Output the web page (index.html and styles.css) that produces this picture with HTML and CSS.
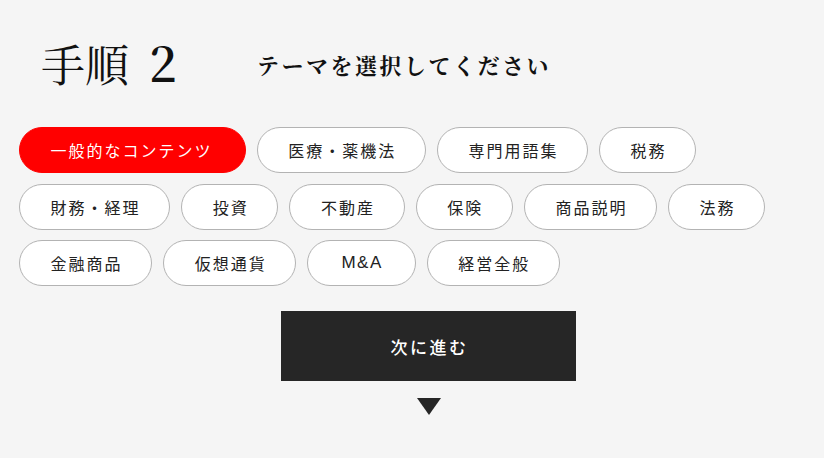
FILE: index.html
```html
<!DOCTYPE html>
<html lang="ja">
<head>
<meta charset="utf-8">
<title>手順 2</title>
<link rel="stylesheet" href="styles.css">
</head>
<body>
<main class="step">
  <header class="step-head">
    <h1 class="step-title">手順<span class="step-num">2</span></h1>
    <p class="step-lead">テーマを選択してください</p>
  </header>
  <ul class="themes">
    <li class="chip chip-active">一般的なコンテンツ</li>
    <li class="chip">医療・薬機法</li>
    <li class="chip">専門用語集</li>
    <li class="chip">税務</li>
    <li class="chip">財務・経理</li>
    <li class="chip">投資</li>
    <li class="chip">不動産</li>
    <li class="chip">保険</li>
    <li class="chip">商品説明</li>
    <li class="chip">法務</li>
    <li class="chip">金融商品</li>
    <li class="chip">仮想通貨</li>
    <li class="chip chip-latin">M&amp;A</li>
    <li class="chip">経営全般</li>
  </ul>
  <div class="actions">
    <button class="next" type="button">次に進む</button>
    <span class="arrow"></span>
  </div>
</main>
</body>
</html>
```

FILE: styles.css
```css
html, body {
  margin: 0;
  padding: 0;
  background: #f5f5f5;
}
body {
  width: 824px;
  height: 458px;
  overflow: hidden;
  font-family: "Noto Sans CJK JP", "Noto Sans", sans-serif;
  color: #222;
}
.step {
  padding: 33px 19px 0;
}
.step-head {
  display: flex;
  align-items: center;
  padding-left: 22px;
  height: 58px;
  margin-bottom: 36px;
}
.step-title {
  margin: 0;
  font-family: "Noto Serif CJK JP", "Liberation Serif", serif;
  font-weight: 400;
  font-size: 44px;
  line-height: 50px;
  color: #111;
  width: 216px;
  display: flex;
  align-items: baseline;
}
.step-num {
  font-family: "Noto Serif CJK JP", "Liberation Serif", serif;
  font-weight: 600;
  font-size: 48px;
  margin-left: 20px;
}
.step-lead {
  margin: 4px 0 0;
  font-family: "Noto Serif CJK JP", "Liberation Serif", serif;
  font-weight: 700;
  font-size: 22px;
  letter-spacing: 2.5px;
  color: #111;
}
.themes {
  list-style: none;
  margin: 0;
  padding: 0;
  display: flex;
  flex-wrap: wrap;
  gap: 10.5px 11px;
}
.chip {
  box-sizing: border-box;
  height: 46px;
  padding: 0 28.6px 0 30.6px;
  border: 1px solid #b3b3b3;
  border-radius: 23px;
  background: #fff;
  font-size: 16px;
  line-height: 44px;
  letter-spacing: 2px;
  color: #222;
  white-space: nowrap;
}
.chip-active {
  background: #ff0000;
  border-color: #ff0000;
  color: #fff;
  padding-right: 32px;
}
.chip-latin {
  font-family: "Liberation Sans", sans-serif;
  font-size: 17px;
  letter-spacing: 1.5px;
  padding: 0 32px 0 33px;
}
.actions {
  display: flex;
  flex-direction: column;
  align-items: center;
  padding-left: 33px;
  padding-top: 25px;
}
.next {
  width: 295px;
  height: 70px;
  border: 0;
  border-radius: 0;
  background: #262626;
  color: #fff;
  font-family: "Noto Sans CJK JP", "Noto Sans", sans-serif;
  font-size: 17px;
  font-weight: 500;
  letter-spacing: 2.5px;
  padding: 0 0 0 2px;
}
.arrow {
  margin-top: 17px;
  width: 0;
  height: 0;
  border-left: 12px solid transparent;
  border-right: 12px solid transparent;
  border-top: 17px solid #262626;
}
```
